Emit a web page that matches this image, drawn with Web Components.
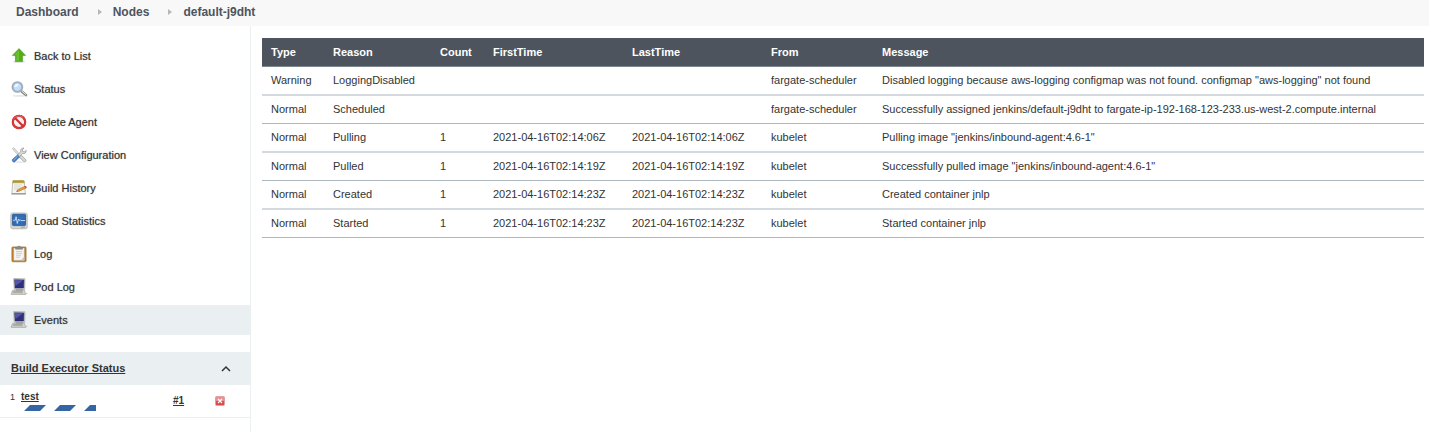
<!DOCTYPE html>
<html lang="en">
<head>
<meta charset="utf-8">
<meta name="viewport" content="width=device-width, initial-scale=1">
<title>default-j9dht [Jenkins]</title>
<style>
    html, body{
        height: 100%;
        margin: 0;
    }

    body{
        font-family: "Liberation Sans", Arial, sans-serif;
        font-size: 11px;
        line-height: 16px;
        color: #333;
        background: #fff;
    }
</style>
</head>
<body>

<node-page>
    <bread-crumbs slot="top">
        <crumb-link href="#dashboard">Dashboard</crumb-link>
        <crumb-link href="#nodes">Nodes</crumb-link>
        <crumb-link href="#default-j9dht">default-j9dht</crumb-link>
    </bread-crumbs>

    <task-list slot="side">
        <task-link icon="up" href="#list">Back to List</task-link>
        <task-link icon="search" href="#status">Status</task-link>
        <task-link icon="delete" href="#delete">Delete Agent</task-link>
        <task-link icon="tools" href="#configure">View Configuration</task-link>
        <task-link icon="notepad" href="#builds">Build History</task-link>
        <task-link icon="monitor" href="#load">Load Statistics</task-link>
        <task-link icon="clipboard" href="#log">Log</task-link>
        <task-link icon="computer" href="#podlog">Pod Log</task-link>
        <task-link icon="computer" href="#events" active>Events</task-link>
    </task-list>

    <executor-pane slot="side">
        <span slot="title">Build Executor Status</span>
        <executor-row number="1" build="#1">test</executor-row>
    </executor-pane>

    <events-table></events-table>
</node-page>

<script>
const icons = {
    up: `
        <ellipse cx="8" cy="13.8" rx="6" ry="1" fill="#000" opacity=".15"/>
        <path d="M8 .6 14.6 7.400H11.600V13.400H4.400V7.400H1.400z" fill="#55ad1c" stroke="#4a9a1c" stroke-width=".6" stroke-linejoin="round"/>
        <path d="M8 2 3.400 6.700h2v6H8z" fill="#86d147" opacity=".5"/>`,
    search: `
        <ellipse cx="8" cy="14.800" rx="7" ry=".9" fill="#000" opacity=".1"/>
        <path d="m10.400 10.200 4.600 3.900" stroke="#8a8d8a" stroke-width="2.600" stroke-linecap="round"/>
        <path d="m11 10.200 3.800 3.300" stroke="#dfe0de" stroke-width="1" stroke-linecap="round"/>
        <circle cx="6.400" cy="6" r="5.200" fill="#b7d6f6" stroke="#a9acb1" stroke-width="1.300"/>
        <circle cx="6.400" cy="6" r="4.300" fill="#c3ddfa" stroke="#6f9cd0" stroke-width=".6"/>
        <path d="M3.200 6A3.400 3.400 0 0 1 7.200 2.700C8.300 4.600 6 6.200 3.200 6z" fill="#fff" opacity=".8"/>`,
    delete: `
        <circle cx="8" cy="8" r="6.200" fill="#f3f1f1" stroke="#bd2424" stroke-width="2.200"/>
        <circle cx="8" cy="8" r="6.200" fill="none" stroke="#e03c3c" stroke-width="1.500"/>
        <path d="m3.800 3.800 8.400 8.400" stroke="#d32b2b" stroke-width="2"/>
        <path d="M3 4.600A6.200 6.200 0 0 1 12 3.400" fill="none" stroke="#f38282" stroke-width=".6"/>`,
    tools: `
        <ellipse cx="8" cy="15" rx="6.500" ry=".8" fill="#000" opacity=".1"/>
        <path d="m1.600 1.500.9-.7 1.600 1.300 5.300 6.200-1 1L2.800 3.500z" fill="#e5e7e6" stroke="#8f9290" stroke-width=".5"/>
        <path d="m8.200 9.900 2-1.900 4.400 4.300c1.500 1.700-.5 3.500-2.100 2.100z" fill="#d5d7d5" stroke="#8f9290" stroke-width=".6"/>
        <path d="M15.200 3.400c.3 2.300-1.600 3.800-3.700 3.200L8.400 9.700 6.600 8 9.600 4.800C9.100 2.600 10.700.7 13 1l-1.700 1.900.3 1.600 1.700.3z" fill="#d9dbd9" stroke="#858886" stroke-width=".6" stroke-linejoin="round"/>
        <path d="m6.500 8 2 1.900-4.300 4.500c-1.700 1.500-3.800-.3-2.500-2.100z" fill="#4a83cd" stroke="#2a5796" stroke-width=".6"/>
        <path d="m6.400 9.300-3.900 4" stroke="#95bdee" stroke-width=".8"/>`,
    notepad: `
        <path d="M1.800 1.800h11.400l1.200 11.800H.8z" fill="#f6f6f1" stroke="#a6a7a0" stroke-width=".7"/>
        <path d="M.6 13.200h14.200l.2 1.400H.4z" fill="#92938c"/>
        <path d="M1.900.6h11.200l.2 2.200H1.700z" fill="#c6a62c" stroke="#9b801e" stroke-width=".4"/>
        <path d="M3 .4v1.800M5 .4v1.800M7 .4v1.800M9 .4v1.800M11 .4v1.800" stroke="#83701e" stroke-width=".5"/>
        <path d="M3.200 5h8M3.100 7h6.500M3 9h4" stroke="#c7c8c3" stroke-width=".7"/>
        <path d="m5.600 11.400 1.400-2 7-3.200 1.300 1.700-7.200 3.300z" fill="#eb9d3f" stroke="#9a5d16" stroke-width=".5"/>
        <path d="m13.200 6.500 1.100-.5q1.700.2 1.300 1.700l-1.200.6z" fill="#d84b38"/>
        <path d="m5.600 11.400.6-.9.7.7z" fill="#333"/>`,
    monitor: `
        <rect x="-.3" y="-.1" width="16.600" height="16" rx="2" fill="#d4d5ce" stroke="#a6a8a0" stroke-width=".6"/>
        <rect x="1.400" y="1.300" width="13.200" height="11.300" rx="1" fill="#2f69b5" stroke="#1f4d8d" stroke-width=".7"/>
        <path d="M1.800 4.700h12.400M1.800 8.700h12.400M5 1.600v10.700M8 1.600v10.700M11 1.600v10.700" stroke="#5589c4" stroke-width=".3"/>
        <path d="M1.900 7.200h2.400l.8-3.500 1.200 6.800 1.100-4.300.9 1.400.8-1 .8.900h4.200" fill="none" stroke="#d6ecff" stroke-width=".8"/>
        <path d="M10 14.200h4" stroke="#8b8d85" stroke-width=".7"/>`,
    clipboard: `
        <rect x=".9" y=".9" width="14.200" height="14.900" rx="1" fill="#c2812c" stroke="#94611f" stroke-width=".6"/>
        <path d="M2.700 2h10.600v12.400H2.700z" fill="#f5f5f3" stroke="#a4a5a0" stroke-width=".4"/>
        <path d="M13.300 10.700v3.700H9.600z" fill="#c4c5c1"/>
        <path d="M5 5.500h6.200M5 7.400h6.200M5 9.300h5M5 11.200h4" stroke="#c0c1bd" stroke-width=".7"/>
        <path d="M4.600 3.200V1.500L6.400 1Q8-1.200 9.600 1l1.800.5v1.700z" fill="#8e908c" stroke="#5d5f5b" stroke-width=".4"/>`,
    computer: `
        <path d="m2.600-.5 11.400.3-.3 10.600H3.200z" fill="#d5d5cf" stroke="#a0a19b" stroke-width=".6"/>
        <path d="m3.600.7 9.300.2-.3 8.100H4.100z" fill="#2f2f80" stroke="#232360" stroke-width=".5"/>
        <path d="m3.900 1 8.400.2L4.300 7z" fill="#6768b4" opacity=".7"/>
        <path d="M5 10.500h6.800v1.200H5z" fill="#82837d"/>
        <path d="M1.500 11.400h12l1.200 4H.1z" fill="#d6d6d0" stroke="#969790" stroke-width=".6"/>
        <path d="M2.200 12.500h9.300M1.700 13.700h10.200" stroke="#92938d" stroke-width=".7"/>
        <ellipse cx="15.500" cy="14.500" rx=".9" ry=".7" fill="#c7c8c2"/>`
};

const events = [
    ['Warning', 'LoggingDisabled', '', '', '', 'fargate-scheduler', 'Disabled logging because aws-logging configmap was not found. configmap "aws-logging" not found'],
    ['Normal', 'Scheduled', '', '', '', 'fargate-scheduler', 'Successfully assigned jenkins/default-j9dht to fargate-ip-192-168-123-233.us-west-2.compute.internal'],
    ['Normal', 'Pulling', '1', '2021-04-16T02:14:06Z', '2021-04-16T02:14:06Z', 'kubelet', 'Pulling image "jenkins/inbound-agent:4.6-1"'],
    ['Normal', 'Pulled', '1', '2021-04-16T02:14:19Z', '2021-04-16T02:14:19Z', 'kubelet', 'Successfully pulled image "jenkins/inbound-agent:4.6-1"'],
    ['Normal', 'Created', '1', '2021-04-16T02:14:23Z', '2021-04-16T02:14:23Z', 'kubelet', 'Created container jnlp'],
    ['Normal', 'Started', '1', '2021-04-16T02:14:23Z', '2021-04-16T02:14:23Z', 'kubelet', 'Started container jnlp']
];

// slots: top, side, default = main content
class NodePage extends HTMLElement{

    constructor(){
        super();

        this.attachShadow({mode: 'open'}).innerHTML = `
            <style>

                :host{
                    display: flex;
                    flex-direction: column;
                    min-height: 100%;
                }

                .body{
                    display: grid;
                    grid-template-columns: 251px minmax(0, 1fr);
                    flex: 1;
                }

                aside{
                    border-right: 1px solid #eaeff2;
                    padding-top: 15px;
                }

                main{
                    padding: 12px 5px 12px 11px;
                }

            </style>
            <slot name="top"></slot>
            <div class="body">
                <aside><slot name="side"></slot></aside>
                <main><slot></slot></main>
            </div>
        `;
    }

}

class BreadCrumbs extends HTMLElement{

    constructor(){
        super();

        this.attachShadow({mode: 'open'}).innerHTML = `
            <style>

                :host{
                    display: block;
                    background-color: #f8f8f8;
                }

                nav{
                    display: flex;
                    padding: 4px 16px 6px;
                }

            </style>
            <nav aria-label="Breadcrumb"><slot></slot></nav>
        `;
    }

}

// usage: crumb-link[href(required)]
class CrumbLink extends HTMLElement{

    constructor(){
        super();

        this.attachShadow({mode: 'open'}).innerHTML = `
            <style>

                :host{
                    display: flex;
                    align-items: center;
                    font-size: 12px;
                    font-weight: bold;
                }

                a{
                    color: #4d545d;
                    text-decoration: none;
                }

                svg{
                    width: 4px;
                    height: 6px;
                    margin: 0 11px 0 19px;
                    fill: #b5b8bb;
                }

                :host(:last-child) svg{
                    display: none;
                }

            </style>
            <a><slot></slot></a>
            <svg viewBox="0 0 4 6" aria-hidden="true"><path d="M0 0 4 3 0 6z"/></svg>
        `;
    }

    connectedCallback(){
        this.shadowRoot.querySelector('a').href = this.getAttribute('href');
    }

}

class TaskList extends HTMLElement{

    constructor(){
        super();

        this.attachShadow({mode: 'open'}).innerHTML = `
            <style>

                :host{
                    display: block;
                    margin-bottom: 17px;
                }

                nav{
                    display: flex;
                    flex-direction: column;
                    gap: 3px;
                }

            </style>
            <nav aria-label="Tasks"><slot></slot></nav>
        `;
    }

}

// usage: task-link[icon(required), href(required), active(optional)]
class TaskLink extends HTMLElement{

    constructor(){
        super();

        this.attachShadow({mode: 'open'}).innerHTML = `
            <style>

                :host{
                    display: block;
                }

                :host([active]){
                    background-color: #eaeff2;
                }

                a{
                    display: flex;
                    align-items: center;
                    gap: 7px;
                    padding: 7px 11px;
                    color: #333;
                    text-decoration: none;
                    text-shadow: 0 0 1px #3338;
                }

                svg{
                    width: 16px;
                    height: 16px;
                    overflow: visible;
                }

            </style>
            <a><svg viewBox="0 0 16 16" fill="none" aria-hidden="true"></svg><slot></slot></a>
        `;
    }

    connectedCallback(){
        this.shadowRoot.querySelector('a').href = this.getAttribute('href');
        this.shadowRoot.querySelector('svg').innerHTML = icons[this.getAttribute('icon')];
    }

}

// slots: title, default = executor rows
class ExecutorPane extends HTMLElement{

    constructor(){
        super();

        this.attachShadow({mode: 'open'}).innerHTML = `
            <style>

                :host{
                    display: block;
                }

                header{
                    display: flex;
                    align-items: center;
                    justify-content: space-between;
                    padding: 8px 18px 9px 11px;
                    background-color: #eaeff2;
                    font-weight: bold;
                }

                a{
                    color: #333;
                }

                button{
                    display: flex;
                    padding: 0;
                    border: 0;
                    background: none;
                    cursor: pointer;
                }

                svg{
                    width: 12px;
                    height: 12px;
                }

            </style>
            <header>
                <a href="#executors"><slot name="title"></slot></a>
                <button type="button" aria-label="Collapse" aria-expanded="true">
                    <svg viewBox="0 0 12 12" aria-hidden="true"><path d="m2 9 4-4 4 4" fill="none" stroke="#333" stroke-width="1.5"/></svg>
                </button>
            </header>
            <div class="rows"><slot></slot></div>
        `;

        this.button = this.shadowRoot.querySelector('button');
        this.rows = this.shadowRoot.querySelector('.rows');
        this.button.addEventListener('click', this.toggle);
    }

    toggle = () => {
        this.rows.hidden = !this.rows.hidden;
        this.button.setAttribute('aria-expanded', String(!this.rows.hidden));
    }

}

// usage: executor-row[number(required), build(required)]
class ExecutorRow extends HTMLElement{

    constructor(){
        super();

        this.attachShadow({mode: 'open'}).innerHTML = `
            <style>

                :host{
                    display: grid;
                    grid-template-columns: 11px 1fr 39px 16px;
                    align-items: center;
                    padding: 4px 22px 5px 10px;
                    border-bottom: 1px solid #eaeff2;
                    font-size: 10px;
                }

                .number{
                    align-self: start;
                    font-size: 9px;
                }

                a{
                    color: #333;
                    font-weight: bold;
                }

                .bar{
                    display: block;
                    width: 75px;
                    height: 6px;
                    margin-bottom: 1px;
                }

                button{
                    display: flex;
                    justify-content: center;
                    padding: 0;
                    border: 0;
                    background: none;
                    cursor: pointer;
                }

                .stop{
                    width: 10px;
                    height: 10px;
                }

            </style>
            <span class="number"></span>
            <div>
                <a href="#job"><slot></slot></a>
                <svg class="bar" viewBox="0 0 75 6" role="img" aria-label="Build in progress">
                    <path d="M9 0h16l-6 6h-16zM39 0h16l-6 6h-16zM69 0H75v6H63z" fill="#3465a4"/>
                </svg>
            </div>
            <a class="build" href="#build"></a>
            <button type="button" aria-label="Terminate build">
                <svg class="stop" viewBox="0 0 10 10" aria-hidden="true">
                    <rect x=".5" y=".5" width="9" height="9" rx="1" fill="#eb9090" stroke="#e0a0a0"/>
                    <path d="M1 5h8v4H1z" fill="#d63a3a" opacity=".8"/>
                    <path d="m3 3 4 4M7 3 3 7" stroke="#fff" stroke-width="1.2"/>
                </svg>
            </button>
        `;
    }

    connectedCallback(){
        this.shadowRoot.querySelector('.number').textContent = this.getAttribute('number');
        this.shadowRoot.querySelector('.build').textContent = this.getAttribute('build');
    }

}

class EventsTable extends HTMLElement{

    constructor(){
        super();

        this.attachShadow({mode: 'open'}).innerHTML = `
            <style>

                :host{
                    display: block;
                }

                table{
                    width: 100%;
                    table-layout: fixed;
                    border-collapse: separate;
                    border-spacing: 0;
                }

                th, td{
                    padding: 5px 0 6px 9px;
                    text-align: left;
                    overflow-wrap: anywhere;
                }

                th{
                    padding-top: 6px;
                    border-bottom: 1px solid #7d8790;
                    background-color: #4d545d;
                    color: #fff;
                }

                td{
                    border-bottom: 1px solid #acb7c0;
                }

                tbody tr:nth-child(odd) td{
                    border-bottom: 2px solid #d3d9de;
                }

                .type{ width: 62px; }
                .reason{ width: 107px; }
                .count{ width: 53px; }
                .time{ width: 139px; }
                .from{ width: 111px; }

            </style>
            <table>
                <colgroup>
                    <col class="type"><col class="reason"><col class="count">
                    <col class="time"><col class="time"><col class="from"><col>
                </colgroup>
                <thead>
                    <tr>
                        <th>Type</th><th>Reason</th><th>Count</th><th>FirstTime</th>
                        <th>LastTime</th><th>From</th><th>Message</th>
                    </tr>
                </thead>
                <tbody></tbody>
            </table>
        `;

        const tbody = this.shadowRoot.querySelector('tbody');
        events.forEach((event) => {
            const row = tbody.insertRow();
            event.forEach((text) => {
                row.insertCell().textContent = text;
            });
        });
    }

}

window.customElements.define('node-page', NodePage);
window.customElements.define('bread-crumbs', BreadCrumbs);
window.customElements.define('crumb-link', CrumbLink);
window.customElements.define('task-list', TaskList);
window.customElements.define('task-link', TaskLink);
window.customElements.define('executor-pane', ExecutorPane);
window.customElements.define('executor-row', ExecutorRow);
window.customElements.define('events-table', EventsTable);
</script>
</body>
</html>
